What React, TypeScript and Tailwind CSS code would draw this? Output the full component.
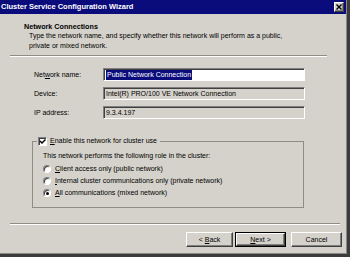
import React from "react";

const sunken =
  "border border-t-[#808080] border-l-[#808080] border-b-white border-r-white shadow-[inset_1px_1px_0_#404040]";
const raised =
  "border border-t-white border-l-white border-b-[#404040] border-r-[#404040] shadow-[inset_-1px_-1px_0_#808080]";

function Field({ label, children, white }: { label: React.ReactNode; children: React.ReactNode; white?: boolean }) {
  return (
    <div className="flex items-center h-[13px]">
      <div className="w-[103px] pl-[34px]">{label}</div>
      <div
        className={`w-[202px] h-[13px] flex items-center pl-[2px] ${sunken} ${white ? "bg-white" : "bg-[#d5d2cb]"}`}
      >
        {children}
      </div>
    </div>
  );
}

function Radio({ checked, children }: { checked?: boolean; children: React.ReactNode }) {
  return (
    <div className="flex items-center h-[12px]">
      <div className="w-[8px] h-[8px] shrink-0 rounded-full bg-white flex items-center justify-center border border-t-[#808080] border-l-[#808080] border-b-white border-r-white shadow-[inset_1px_1px_0_#404040]">
        {checked && <div className="w-[3px] h-[3px] rounded-full bg-black" />}
      </div>
      <span className="ml-[4px]">{children}</span>
    </div>
  );
}

function Button({ children, isDefault, w }: { children: React.ReactNode; isDefault?: boolean; w: string }) {
  return (
    <div className={`${w} h-[15px] ${isDefault ? "border border-black" : ""}`}>
      <div className={`w-full h-full flex items-center justify-center bg-[#d5d2cb] ${raised}`}>{children}</div>
    </div>
  );
}

export default function App() {
  return (
    <div
      className="w-[350px] h-[257px] bg-[#d5d2cb] text-black text-[7px] leading-[10px] border-r-[3px] border-b-[3px] border-[#3c3c3c]"
      style={{ fontFamily: '"Liberation Sans", Arial, sans-serif' }}
    >
      <div className="h-full flex flex-col border-r border-b border-[#8a8884]">
        {/* Title bar */}
        <div className="h-[14px] shrink-0 bg-[#0b0c7c] flex items-center justify-between pl-[1px] pr-[2px]">
          <span className="text-white font-bold text-[7.5px]">Cluster Service Configuration Wizard</span>
          <div className={`w-[10px] h-[10px] bg-[#d5d2cb] flex items-center justify-center ${raised}`}>
            <svg width="6" height="6" viewBox="0 0 6 6">
              <path d="M0.5 0.5 L5.5 5.5 M5.5 0.5 L0.5 5.5" stroke="#000" strokeWidth="1.4" />
            </svg>
          </div>
        </div>

        {/* Header */}
        <div className="h-[41px] shrink-0 pl-[24px] pt-[8px]">
          <div className="font-bold leading-[9px] text-[7.2px]">Network Connections</div>
          <div className="pl-[5px] leading-[10px]">
            Type the network name, and specify whether this network will perform as a public,
            <br />
            private or mixed network.
          </div>
        </div>
        <div className="ml-[10px] w-[317px] h-[2px] shrink-0 border-t border-t-[#8f8c86] border-b border-b-white" />

        {/* Fields */}
        <div className="mt-[11px] h-[51px] shrink-0 flex flex-col gap-[6px]">
          <Field
            white
            label={
              <>
                Net<span className="underline">w</span>ork name:
              </>
            }
          >
            <span className="bg-[#0b0c7c] text-white px-[1px] leading-[10px]">Public Network Connection</span>
          </Field>
          <Field label="Device:">Intel(R) PRO/100 VE Network Connection</Field>
          <Field label="IP address:">9.3.4.197</Field>
        </div>

        {/* Group box */}
        <div className="mt-[17px] ml-[32px] w-[272px] shrink-0">
          <div className="flex h-[10px]">
            <div className="w-[5px] h-[5px] self-end border-t border-l border-[#8f8c86]" />
            <div className="flex items-center px-[1px]">
              <div className={`w-[9px] h-[9px] bg-white flex items-center justify-center ${sunken}`}>
                <svg width="7" height="7" viewBox="0 0 7 7">
                  <path d="M1 3 L3 5 L6.5 1.5" stroke="#000" strokeWidth="1.5" fill="none" />
                </svg>
              </div>
              <span className="ml-[3px] pr-[2px]">
                <span className="underline">E</span>nable this network for cluster use
              </span>
            </div>
            <div className="flex-1 h-[5px] self-end border-t border-r border-[#8f8c86]" />
          </div>
          <div className="h-[62px] border-l border-r border-b border-[#8f8c86] pl-[10px] pt-[5px]">
            <div>This network performs the following role in the cluster:</div>
            <div className="pt-[2px]">
              <Radio>
                <span className="underline">C</span>lient access only (public network)
              </Radio>
              <Radio>
                <span className="underline">I</span>nternal cluster communications only (private network)
              </Radio>
              <Radio checked>
                <span className="underline">A</span>ll communications (mixed network)
              </Radio>
            </div>
          </div>
        </div>

        {/* Bottom separator */}
        <div className="mt-[15px] ml-[10px] w-[330px] h-[2px] shrink-0 border-t border-t-[#8f8c86] border-b border-b-white" />

        {/* Buttons */}
        <div className="mt-[7px] shrink-0 flex justify-end pr-[4px]">
          <Button w="w-[47px]">
            &lt; <span className="underline ml-[2px]">B</span>ack
          </Button>
          <div className="w-[2px]" />
          <Button w="w-[51px]" isDefault>
            <span className="underline">N</span>ext &gt;
          </Button>
          <div className="w-[5px]" />
          <Button w="w-[51px]">Cancel</Button>
        </div>
      </div>
    </div>
  );
}
